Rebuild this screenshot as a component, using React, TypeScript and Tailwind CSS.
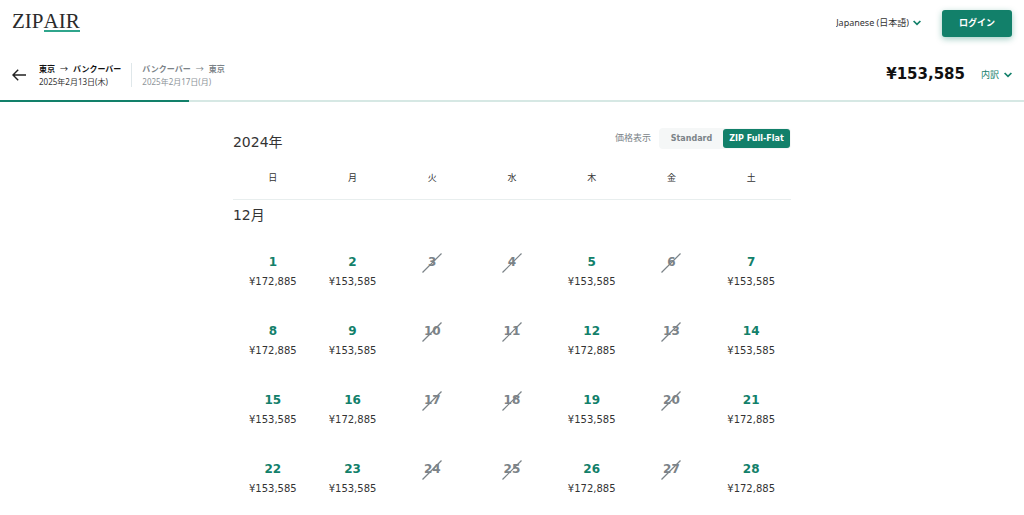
import { useState } from "react";

const BASE = 153585;
const HIGH = 172885;

type Day = { date: number; price: number | null };

const weekdays = ["日", "月", "火", "水", "木", "金", "土"];

const pricesByWeek: (number | null)[][] = [
  [HIGH, BASE, null, null, BASE, null, BASE],
  [HIGH, BASE, null, null, HIGH, null, BASE],
  [BASE, HIGH, null, null, BASE, null, HIGH],
  [BASE, BASE, null, null, HIGH, null, HIGH],
];

const weeks: Day[][] = pricesByWeek.map((week, w) =>
  week.map((price, d) => ({ date: w * 7 + d + 1, price })),
);

const yen = (value: number) => `¥${value.toLocaleString("en-US")}`;

function Chevron() {
  return (
    <svg viewBox="0 0 8 6" className="h-[6px] w-2 shrink-0" fill="none" stroke="#12806a" strokeWidth="1.7" aria-hidden="true">
      <path d="M0.6 1 L4 4.4 L7.4 1" />
    </svg>
  );
}

function Logo() {
  return (
    <a
      href="#"
      className="flex pb-[2px] font-['Liberation_Serif',serif] text-[21px] leading-[17px] text-[#2b2b2b]"
    >
      ZIP<span className="border-b-2 border-[#2fa58c]">AIR</span>
    </a>
  );
}

function Leg({ from, to, date, active }: { from: string; to: string; date: string; active?: boolean }) {
  return (
    <button type="button" className="text-left">
      <span
        className={
          active
            ? "flex gap-[5px] text-[8px] leading-[13px] font-bold text-[#111]"
            : "flex gap-[5px] text-[8px] leading-[13px] font-bold text-[#7b8388]"
        }
      >
        <span>{from}</span>
        <span className="font-normal">→</span>
        <span>{to}</span>
      </span>
      <span
        className={
          active
            ? "block text-[8px] leading-[13px] text-[#333]"
            : "block text-[8px] leading-[13px] text-[#8d9499]"
        }
      >
        {date}
      </span>
    </button>
  );
}

function DayCell({ day }: { day: Day }) {
  if (day.price === null) {
    return (
      <div className="relative flex h-[69px] justify-center pt-[22px] text-[12px] leading-[18px] font-bold text-[#7b8388]">
        {day.date}
        <svg
          viewBox="0 0 20 20"
          className="absolute top-[22px] left-1/2 size-5 -translate-x-1/2"
          stroke="#7b8388"
          strokeWidth="1.2"
          aria-hidden="true"
        >
          <path d="M0.5 19.5 L19.5 0.5" />
        </svg>
      </div>
    );
  }
  return (
    <button type="button" className="flex h-[69px] w-full flex-col items-center pt-[22px]">
      <span className="text-[12px] leading-[18px] font-bold text-[#12806a]">{day.date}</span>
      <span className="text-[10px] leading-[22px] text-[#333]">{yen(day.price)}</span>
    </button>
  );
}

export default function App() {
  const [seat, setSeat] = useState("ZIP Full-Flat");

  return (
    <div className="min-h-screen bg-white font-['Noto_Sans','Noto_Sans_CJK_JP',sans-serif] text-[#333]">
      <header>
        <div className="flex h-[46px] items-center justify-between px-3">
          <Logo />
          <div className="flex items-center gap-[21px]">
            <label className="flex items-center gap-1">
              <select
                aria-label="言語"
                className="field-sizing-content appearance-none bg-transparent text-[9px] leading-4 text-[#333]"
              >
                <option>Japanese (日本語)</option>
              </select>
              <Chevron />
            </label>
            <button
              type="button"
              className="h-[27px] w-[70px] rounded-[3px] bg-[#12806a] text-[9px] font-bold text-white shadow-[0_2px_6px_rgba(18,128,106,0.4)]"
            >
              ログイン
            </button>
          </div>
        </div>

        <div className="flex h-[53px] items-center justify-between px-3 pt-1">
          <div className="flex items-center">
            <button type="button" aria-label="戻る" className="mr-[13px]">
              <svg viewBox="0 0 14 12" className="h-3 w-[14px]" fill="none" stroke="#222" strokeWidth="1.4" aria-hidden="true">
                <path d="M14 6 H1 M6.2 0.8 L1 6 L6.2 11.2" />
              </svg>
            </button>
            <Leg from="東京" to="バンクーバー" date="2025年2月13日(木)" active />
            <div className="mx-[10px] h-6 w-px bg-[#dfe7ea]" />
            <Leg from="バンクーバー" to="東京" date="2025年2月17日(月)" />
          </div>
          <div className="flex items-center gap-4">
            <strong className="pb-[2px] font-['DejaVu_Sans',sans-serif] text-[15px] leading-6 font-bold text-[#111]">
              {yen(BASE)}
            </strong>
            <button type="button" className="flex items-center gap-[5px] text-[9px] leading-4 text-[#12806a]">
              内訳
              <Chevron />
            </button>
          </div>
        </div>
        <div className="mt-px h-[2px] bg-[#d6e8e4]">
          <div className="h-full w-[18.5%] bg-[#12806a]" />
        </div>
      </header>

      <main className="mx-auto w-[54.5%] pt-[26px] font-['DejaVu_Sans','Noto_Sans_CJK_JP',sans-serif]">
        <div className="flex items-start justify-between">
          <h1 className="pt-1 text-[14px] leading-5">2024年</h1>
          <div className="flex items-center gap-2">
            <span className="text-[9px] text-[#7b8388]">価格表示</span>
            <div className="flex h-[21px] items-center rounded bg-[#f5f7f7] px-px text-[8px]">
              {["Standard", "ZIP Full-Flat"].map((name) => (
                <button
                  key={name}
                  type="button"
                  aria-pressed={seat === name}
                  onClick={() => setSeat(name)}
                  className={
                    seat === name
                      ? "h-[19px] w-[67px] rounded-[3px] bg-[#12806a] font-bold text-white"
                      : "h-[19px] w-[63px] rounded-[3px] font-bold text-[#7b8388]"
                  }
                >
                  {name}
                </button>
              ))}
            </div>
          </div>
        </div>

        <table className="mt-[6px] w-full table-fixed border-collapse">
          <thead>
            <tr className="border-b border-[#e8eeee]">
              {weekdays.map((name) => (
                <th key={name} scope="col" className="h-[41px] p-0 text-[9px] leading-4 font-normal">
                  {name}
                </th>
              ))}
            </tr>
          </thead>
          <tbody>
            <tr>
              <th colSpan={7} scope="colgroup" className="h-8 p-0 text-left text-[14px] leading-5 font-normal">
                12月
              </th>
            </tr>
            {weeks.map((week) => (
              <tr key={week[0].date}>
                {week.map((day) => (
                  <td key={day.date} className="p-0">
                    <DayCell day={day} />
                  </td>
                ))}
              </tr>
            ))}
          </tbody>
        </table>
      </main>
    </div>
  );
}
